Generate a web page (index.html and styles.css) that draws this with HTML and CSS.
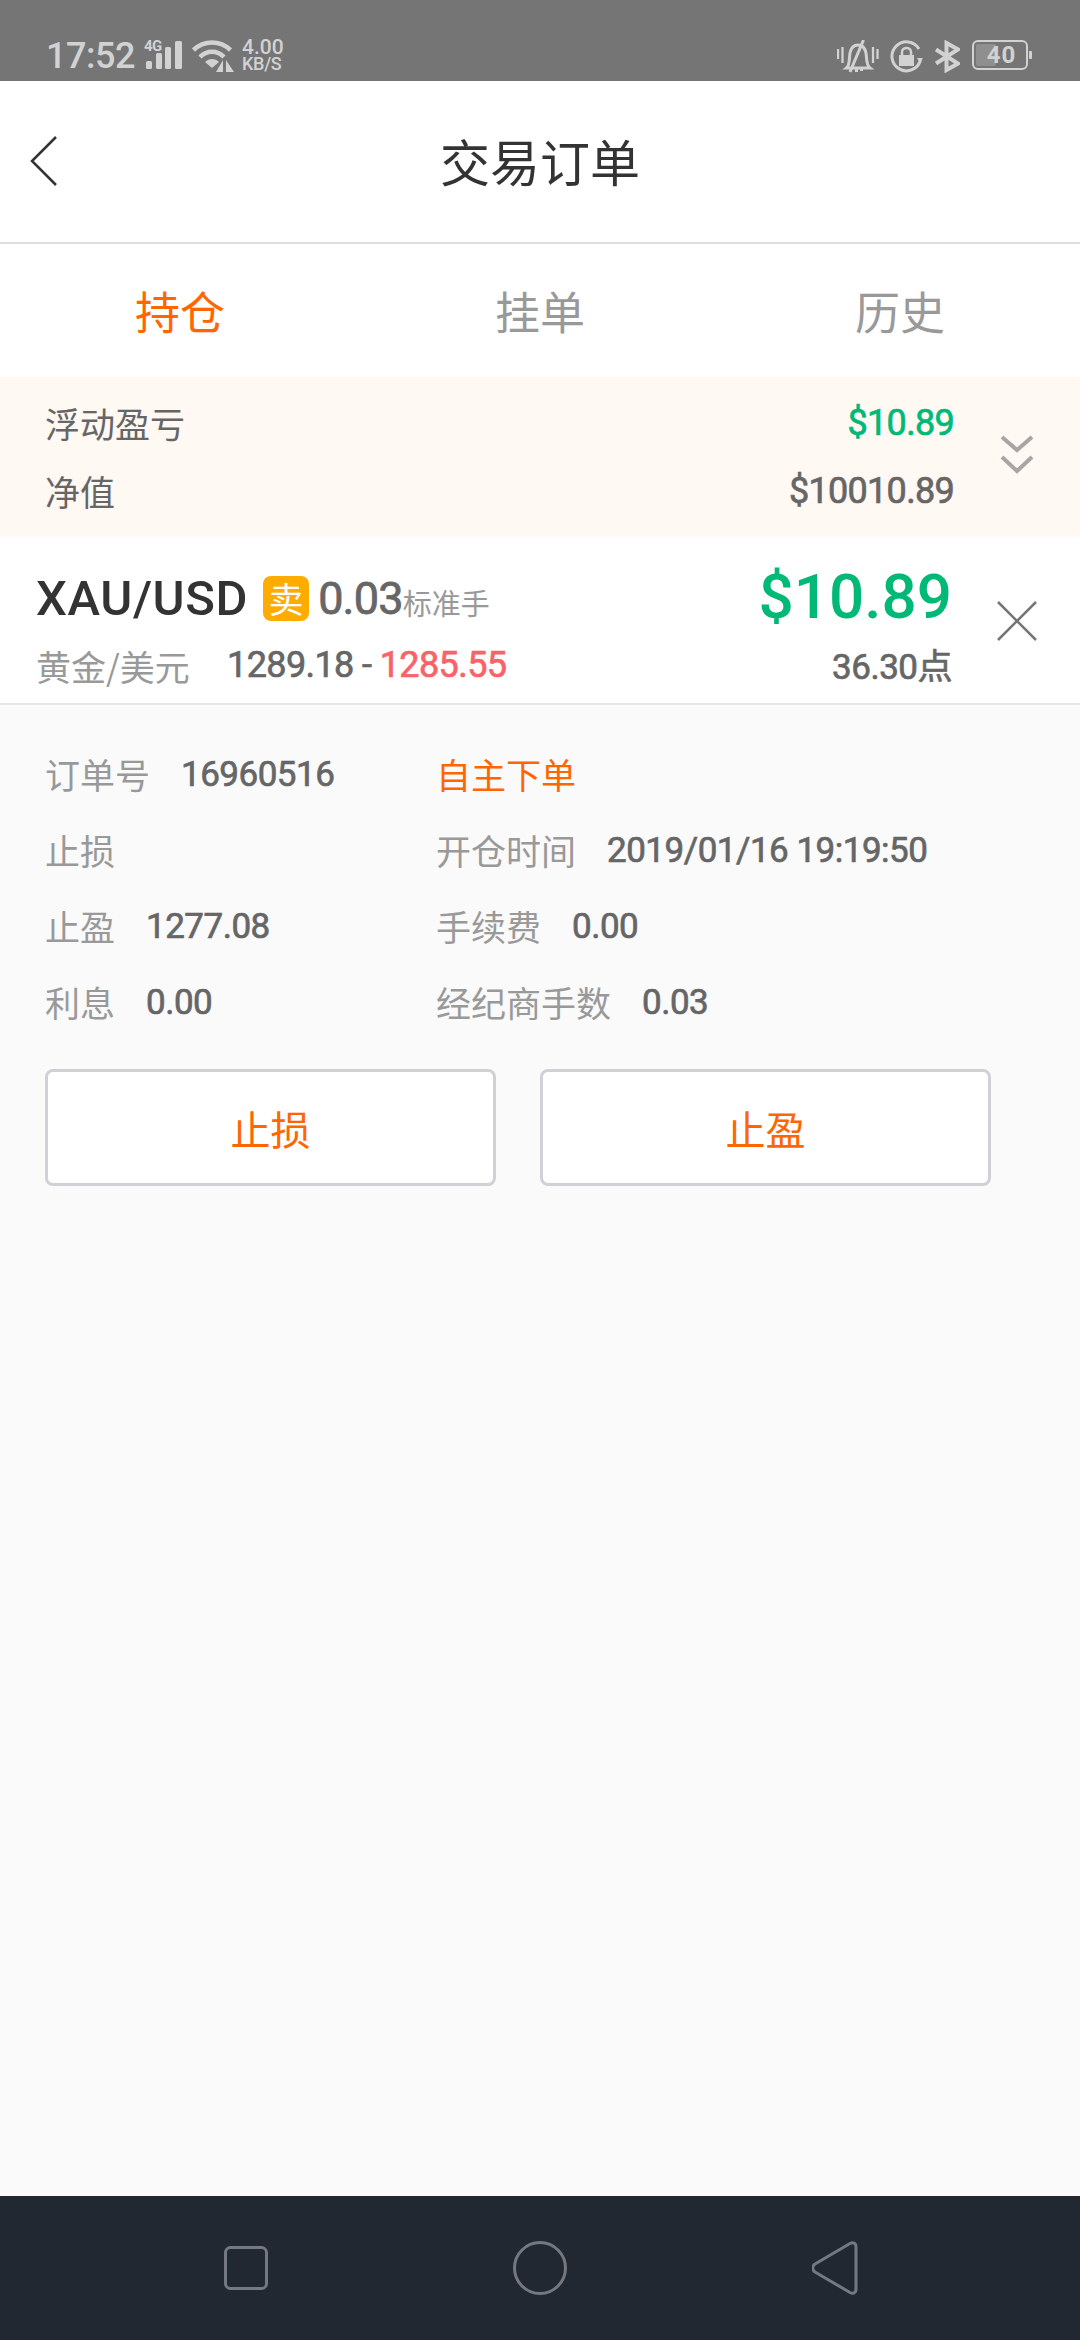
FILE: index.html
```html
<!DOCTYPE html>
<html lang="zh">
<head>
<meta charset="utf-8">
<title>交易订单</title>
<link rel="stylesheet" href="styles.css">
</head>
<body>
<div class="app">
  <div class="status">
    <div class="status-left">
      <span class="clock">17:52</span>
      <span class="signal">
        <span class="net">4G</span>
        <svg class="bars" width="38" height="29" viewBox="0 0 38 29"><g fill="#d2d2d2"><rect x="2" y="20" width="6" height="8" rx="1.500"/><rect x="12" y="12" width="6" height="16" rx="1.500"/><rect x="21" y="6" width="6" height="22" rx="1.500"/><rect x="31" y="0" width="7" height="28" rx="1.500"/></g></svg>
      </span>
      <svg class="wifi" width="44" height="32" viewBox="0 0 44 32"><g fill="none" stroke="#d2d2d2" stroke-width="4.500"><path d="M1.500 10C12 0 28 0 38.500 10"/><path d="M8 17C15 10 25 10 32 17"/></g><path d="M13 22C17 18 23 18 27 22L20 28Z" fill="#d2d2d2"/><path d="M31 20V32H24ZM34 20V32H42Z" fill="#d2d2d2"/></svg>
      <span class="speed"><span class="speed-top">4.00</span><span class="speed-unit">KB/S</span></span>
    </div>
    <div class="status-right">
      <svg class="s-bell" width="42" height="33" viewBox="0 0 42 33"><g fill="none" stroke="#d2d2d2"><path d="M1 9V19M5.500 7V23M36 7V23M40.500 9V19" stroke-width="2.300"/><path d="M9.500 28C13 25 12 19 13 13C14 8 17 5 21 5C25 5 28 8 29 13C30 19 29 25 33 28Z" stroke-width="3"/><path d="M26.500 0L13 32" stroke-width="3"/></g><path d="M18 29H21V32H18ZM23 29H26V31H23Z" fill="#d2d2d2"/></svg>
      <svg class="s-lock" width="33" height="33" viewBox="0 0 33 33"><path d="M30.500 20A14.500 14.500 0 1 1 29 9" fill="none" stroke="#d2d2d2" stroke-width="3"/><path d="M27 18L33 18L30 23Z" fill="#d2d2d2"/><rect x="9" y="15" width="15" height="11" fill="#d2d2d2"/><path d="M12 15V12C12 6.500 21 6.500 21 12V15" fill="none" stroke="#d2d2d2" stroke-width="2.500"/></svg>
      <svg class="s-bt" width="26" height="33" viewBox="0 0 26 33"><path d="M2 9.500L24 23.500L12.500 30V3L24 9.500L2 23.500" fill="none" stroke="#d2d2d2" stroke-width="4"/></svg>
      <span class="battery">
        <span class="battery-body"><span class="battery-fill"></span><span class="battery-num">40</span></span>
        <span class="battery-tip"></span>
      </span>
    </div>
  </div>

  <header class="topbar">
    <svg class="back" width="28" height="50" viewBox="0 0 28 50"><path d="M26 1L2 25L26 49" fill="none" stroke="#333" stroke-width="2.500"/></svg>
    <h1 class="title">交易订单</h1>
  </header>

  <nav class="tabs">
    <span class="tab tab-active">持仓</span>
    <span class="tab">挂单</span>
    <span class="tab">历史</span>
  </nav>

  <section class="summary">
    <div class="summary-rows">
      <div class="summary-row"><span>浮动盈亏</span><span class="num green">$10.89</span></div>
      <div class="summary-row"><span>净值</span><span class="num">$10010.89</span></div>
    </div>
    <svg class="chevrons" width="34" height="42" viewBox="0 0 34 42"><path d="M2 3L17 16L32 3M2 23L17 37L32 23" fill="none" stroke="#a8a6a4" stroke-width="4"/></svg>
  </section>

  <section class="order">
    <div class="order-main">
      <div class="order-line1">
        <span class="symbol">XAU/USD</span>
        <span class="side">卖</span>
        <span class="lots">0.03</span><span class="lot-unit">标准手</span>
      </div>
      <div class="order-line2">
        <span class="cn-name">黄金/美元</span>
        <span class="prices">1289.18 - <span class="red">1285.55</span></span>
      </div>
    </div>
    <div class="order-profit">
      <span class="profit">$10.89</span>
      <span class="points">36.30点</span>
    </div>
    <svg class="close" width="40" height="40" viewBox="0 0 40 40"><path d="M1 1L39 39M39 1L1 39" fill="none" stroke="#757575" stroke-width="2.500"/></svg>
  </section>

  <main class="details">
    <div class="grid">
      <div class="cell"><span class="lbl">订单号</span><span class="val">16960516</span></div>
      <div class="cell"><span class="orange">自主下单</span></div>
      <div class="cell"><span class="lbl">止损</span></div>
      <div class="cell"><span class="lbl">开仓时间</span><span class="val">2019/01/16 19:19:50</span></div>
      <div class="cell"><span class="lbl">止盈</span><span class="val">1277.08</span></div>
      <div class="cell"><span class="lbl">手续费</span><span class="val">0.00</span></div>
      <div class="cell"><span class="lbl">利息</span><span class="val">0.00</span></div>
      <div class="cell"><span class="lbl">经纪商手数</span><span class="val">0.03</span></div>
    </div>
    <div class="actions">
      <button class="btn" type="button">止损</button>
      <button class="btn" type="button">止盈</button>
    </div>
  </main>

  <footer class="navbar">
    <svg width="44" height="44" viewBox="0 0 44 44"><rect x="1.500" y="1.500" width="41" height="41" rx="5" fill="none" stroke="#75787e" stroke-width="3"/></svg>
    <svg width="54" height="54" viewBox="0 0 54 54"><circle cx="27" cy="27" r="25.500" fill="none" stroke="#75787e" stroke-width="3"/></svg>
    <svg width="46" height="54" viewBox="0 0 46 54"><path d="M3 23L38 2.500C41 1 44 2 44 6V48C44 52 41 53 38 51.500L3 31C0 29 0 25 3 23Z" fill="none" stroke="#75787e" stroke-width="3"/></svg>
  </footer>
</div>
</body>
</html>
```
FILE: styles.css
```css
* { box-sizing: border-box; }
html, body { margin: 0; padding: 0; }
body { width: 1080px; height: 2340px; overflow: hidden; background: #fafafa; font-family: "Roboto", "Noto Sans CJK SC", sans-serif; }
.app { width: 1080px; height: 2340px; display: flex; flex-direction: column; }

.status { height: 81px; flex: none; background: #757575; color: #d2d2d2; display: flex; justify-content: space-between; align-items: flex-start; padding: 40px 48px 0 46px; }
.status-left, .status-right { display: flex; align-items: flex-start; }
.clock { font-size: 36px; line-height: 32px; font-weight: 500; width: 98px; letter-spacing: -0.500px; }
.signal { position: relative; display: block; width: 38px; height: 29px; margin-top: 1px; }
.net { position: absolute; left: 0; top: -1px; font-size: 15px; line-height: 13px; font-weight: 700; letter-spacing: -0.500px; }
.bars { position: absolute; left: 0; top: 0; }
.wifi { margin: 0 0 0 10px; }
.speed { display: flex; flex-direction: column; margin: -1px 0 0 6px; }
.speed-top { font-size: 21px; line-height: 17px; font-weight: 500; }
.speed-unit { font-size: 18px; line-height: 15px; font-weight: 500; letter-spacing: -0.300px; }
.status-right { gap: 11px; }
.battery { display: flex; align-items: center; margin-left: 1px; height: 30px; }
.battery-body { width: 56px; height: 30px; border: 2px solid #d2d2d2; border-radius: 6px; position: relative; display: flex; align-items: center; justify-content: center; }
.battery-fill { position: absolute; left: 2px; top: 2px; bottom: 2px; width: 20px; background: #8f8f8f; border-radius: 2px; }
.battery-num { position: relative; font-size: 24px; font-weight: 700; letter-spacing: 1px; margin-left: 3px; }
.battery-tip { width: 3px; height: 8px; margin-left: 1px; background: #d2d2d2; border-radius: 1px; }

.topbar { height: 163px; flex: none; background: #fff; border-bottom: 2px solid #dedede; position: relative; display: flex; align-items: center; justify-content: center; }
.back { position: absolute; left: 30px; top: 55px; }
.title { margin: 0; font-size: 50px; font-weight: 400; color: #333; padding-bottom: 4px; font-family: "Noto Sans CJK SC", sans-serif; }

.tabs { height: 133px; flex: none; background: #fff; display: grid; grid-template-columns: 360px 360px 360px; align-items: center; text-align: center; font-size: 45px; color: #999; font-family: "Noto Sans CJK SC", sans-serif; }
.tab-active { color: #ff6600; }

.summary { height: 160px; flex: none; background: #fff8f3; display: flex; align-items: center; padding: 0 0 0 45px; color: #666; }
.summary-rows { width: 909px; display: flex; flex-direction: column; gap: 26px; }
.summary-row { display: flex; justify-content: space-between; align-items: center; font-size: 35px; line-height: 42px; height: 42px; font-family: "Noto Sans CJK SC", sans-serif; }
.num { font-family: "Roboto", sans-serif; font-size: 36px; font-weight: 400; letter-spacing: -0.700px; -webkit-text-stroke: 0.700px currentColor; }
.green { color: #00b976; }
.chevrons { margin: -4px 0 0 46px; }

.order { height: 168px; flex: none; background: #fff; border-bottom: 2px solid #e6e6ea; display: flex; align-items: flex-start; position: relative; padding: 0 0 0 36px; }
.order-main { width: 914px; }
.order-line1 { display: flex; align-items: center; height: 60px; margin-top: 31px; }
.symbol { font-size: 49px; font-weight: 500; color: #333; letter-spacing: 0.600px; }
.side { width: 46px; height: 45px; margin: 0 9px 0 15px; background: #ffab00; border-radius: 8px; color: #fff; font-size: 35px; line-height: 43px; text-align: center; font-family: "Noto Sans CJK SC", sans-serif; }
.lots { font-size: 45px; font-weight: 400; -webkit-text-stroke: 0.800px currentColor; color: #666; letter-spacing: -0.800px; }
.lot-unit { font-size: 29px; color: #999; margin-top: 8px; font-family: "Noto Sans CJK SC", sans-serif; }
.order-line2 { display: flex; align-items: center; height: 50px; margin-top: 12px; }
.cn-name { font-size: 35px; color: #999; font-family: "Noto Sans CJK SC", sans-serif; width: 191px; }
.prices { font-size: 36px; font-weight: 400; -webkit-text-stroke: 0.700px currentColor; color: #666; letter-spacing: -0.600px; }
.red { color: #f96268; }
.order-profit { position: absolute; right: 128px; top: 20px; display: flex; flex-direction: column; align-items: flex-end; }
.profit { font-size: 62px; line-height: 80px; font-weight: 500; color: #00b976; }
.points { font-size: 35px; line-height: 48px; font-weight: 400; -webkit-text-stroke: 0.700px currentColor; color: #666; margin-top: 7px; letter-spacing: -0.500px; }
.close { position: absolute; right: 43px; top: 64px; }

.details { flex: 1; background: #fafafa; padding: 38px 0 0 45px; }
.grid { display: grid; grid-template-columns: 391px 1fr; grid-auto-rows: 76px; }
.cell { display: flex; align-items: center; height: 60px; font-size: 35px; font-family: "Noto Sans CJK SC", sans-serif; }
.lbl { color: #999; margin-right: 31px; }
.val { color: #666; font-family: "Roboto", sans-serif; font-size: 35px; font-weight: 400; -webkit-text-stroke: 0.700px currentColor; letter-spacing: -0.500px; padding-top: 2px; }
.orange { color: #ff6600; }
.actions { display: flex; gap: 44px; margin: 22px 0 0 0; }
.btn { width: 451px; height: 117px; background: #fff; border: 3px solid #d0d0d6; border-radius: 8px; color: #ff6600; font-size: 40px; font-family: "Noto Sans CJK SC", sans-serif; }

.navbar { height: 144px; flex: none; background: #212832; display: flex; gap: 245px; align-items: center; padding: 0 0 0 224px; }
```
